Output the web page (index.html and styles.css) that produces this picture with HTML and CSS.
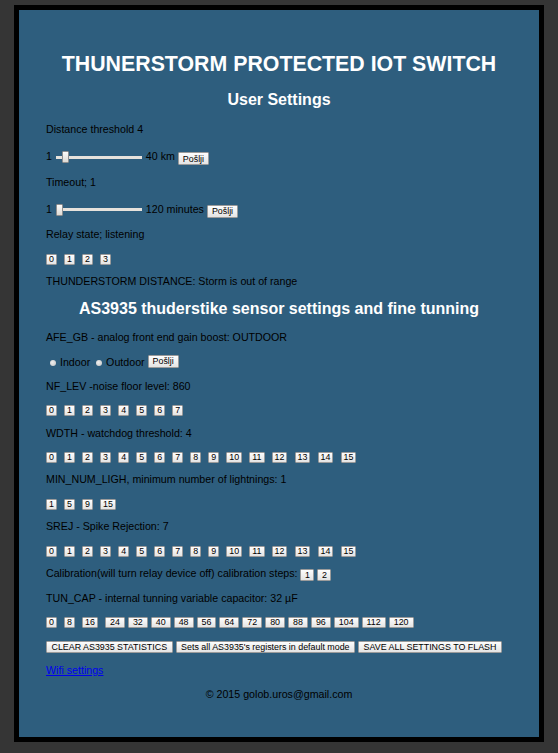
FILE: index.html
```html
<!DOCTYPE html>
<html>
<head>
<meta charset="utf-8">
<title>THUNERSTORM PROTECTED IOT SWITCH</title>
<link rel="stylesheet" href="styles.css">
</head>
<body>
<div class="page">
<h1 class="title">THUNERSTORM PROTECTED IOT SWITCH</h1>
<h2 class="sub user">User Settings</h2>
<p>Distance threshold 4</p>
<p class="slrow">1 <input type="range" class="slider" min="1" max="40" value="4"> 40 km <button class="tb">Pošlji</button></p>
<p>Timeout; 1</p>
<p class="slrow">1 <input type="range" class="slider" min="1" max="120" value="1"> 120 minutes <button class="tb">Pošlji</button></p>
<p>Relay state; listening</p>
<p class="btns"><button class="nb">0</button><button class="nb">1</button><button class="nb">2</button><button class="nb">3</button></p>
<p>THUNDERSTORM DISTANCE: Storm is out of range</p>
<h2 class="sub sensor">AS3935 thuderstike sensor settings and fine tunning</h2>
<p>AFE_GB - analog front end gain boost: OUTDOOR</p>
<p class="radrow"><input type="radio" name="afe" class="radio first"> Indoor <input type="radio" name="afe" class="radio"> Outdoor <button class="tb">Pošlji</button></p>
<p>NF_LEV -noise floor level: 860</p>
<p class="btns"><button class="nb">0</button><button class="nb">1</button><button class="nb">2</button><button class="nb">3</button><button class="nb">4</button><button class="nb">5</button><button class="nb">6</button><button class="nb">7</button></p>
<p>WDTH - watchdog threshold: 4</p>
<p class="btns"><button class="nb">0</button><button class="nb">1</button><button class="nb">2</button><button class="nb">3</button><button class="nb">4</button><button class="nb">5</button><button class="nb">6</button><button class="nb">7</button><button class="nb">8</button><button class="nb">9</button><button class="nb">10</button><button class="nb">11</button><button class="nb">12</button><button class="nb">13</button><button class="nb">14</button><button class="nb">15</button></p>
<p>MIN_NUM_LIGH, minimum number of lightnings: 1</p>
<p class="btns"><button class="nb">1</button><button class="nb">5</button><button class="nb">9</button><button class="nb">15</button></p>
<p>SREJ - Spike Rejection: 7</p>
<p class="btns"><button class="nb">0</button><button class="nb">1</button><button class="nb">2</button><button class="nb">3</button><button class="nb">4</button><button class="nb">5</button><button class="nb">6</button><button class="nb">7</button><button class="nb">8</button><button class="nb">9</button><button class="nb">10</button><button class="nb">11</button><button class="nb">12</button><button class="nb">13</button><button class="nb">14</button><button class="nb">15</button></p>
<p>Calibration(will turn relay device off) calibration steps: <button class="tb cal">1</button> <button class="tb cal">2</button></p>
<p>TUN_CAP - internal tunning variable capacitor: 32 µF</p>
<p class="btns"><button class="nb">0</button><button class="nb">8</button><button class="nb">16</button><button class="nb wide">24</button><button class="nb wide">32</button><button class="nb wide">40</button><button class="nb wide">48</button><button class="nb wide">56</button><button class="nb wide">64</button><button class="nb wide">72</button><button class="nb wide">80</button><button class="nb wide">88</button><button class="nb wide">96</button><button class="nb wide">104</button><button class="nb wide">112</button><button class="nb wide">120</button></p>
<p class="bigrow"><button class="tb big">CLEAR AS3935 STATISTICS</button><button class="tb big">Sets all AS3935's registers in default mode</button><button class="tb big">SAVE ALL SETTINGS TO FLASH</button></p>
<p><a href="#" class="link">Wifi settings</a></p>
<p class="foot">© 2015 golob.uros@gmail.com</p>
</div>
</body>
</html>
```

FILE: styles.css
```css
html, body {
  background: #353535;
}
body {
  margin: 5px 0 0 0;
  font-family: "Liberation Sans", Arial, sans-serif;
  font-size: 10.67px;
  color: #000;
}
.page {
  width: 466px;
  margin: 0 auto;
  border: 5px solid #000;
  background: #2e5e7e;
  padding: 28px 27px 25px 27px;
}
.title {
  font-size: 21.33px;
  font-weight: bold;
  color: #fff;
  text-align: center;
  margin: 14.3px 0 13.3px 0;
}
.sub {
  font-size: 16px;
  font-weight: bold;
  color: #fff;
  text-align: center;
  margin: 13.3px 0;
}
.sub.user {
  margin-bottom: 14.7px;
}
.sub.sensor {
  margin: 11.3px 0 12.7px 0;
}
p {
  margin: 10.67px 0;
  line-height: 13.33px;
}
.slrow {
  margin: 13.5px 0 10.2px 0;
}
.radrow {
  margin: 10px 0;
}
.btns {
  display: flex;
  align-items: center;
  gap: 3px;
  height: 11px;
  margin: 12px 0 10.67px 0;
}
.bigrow {
  display: flex;
  align-items: center;
  gap: 3px;
  height: 12px;
  margin: 13px 0 9.3px 0;
}
.slider {
  -webkit-appearance: none;
  appearance: none;
  width: 86px;
  height: 12px;
  margin: 0 1px;
  padding: 0;
  background: transparent;
  vertical-align: middle;
}
.slider::-webkit-slider-runnable-track {
  height: 3px;
  background: #e6e2dc;
  border: none;
}
.slider::-webkit-slider-thumb {
  -webkit-appearance: none;
  appearance: none;
  width: 7px;
  height: 12px;
  margin-top: -4.5px;
  background: linear-gradient(#fbfbfa, #dedbd5);
  border: 1px solid #8f8f8f;
  border-radius: 1px;
  box-sizing: border-box;
}
button {
  font-family: "Liberation Sans", Arial, sans-serif;
  font-size: 8.9px;
  color: #000;
  background: linear-gradient(#fdfdfd, #e4e4e4);
  border: 1px solid #9b9b9b;
  border-radius: 1px;
  margin: 0;
  box-sizing: border-box;
  cursor: pointer;
}
.nb {
  height: 11px;
  line-height: 9px;
  padding: 0 2px;
  margin-right: 4.1px;
}
.nb.wide {
  padding: 0 4px;
  margin-right: 0;
}
.tb {
  height: 13px;
  line-height: 10px;
  padding: 0 4px;
}
.tb.big {
  height: 12px;
  padding: 0 4.5px;
}
.tb.cal {
  height: 12px;
  padding: 0 3.5px;
  vertical-align: -0.5px;
}
.slrow .tb {
  vertical-align: -1.5px;
}
.radrow .tb {
  vertical-align: 1.5px;
}
.radio {
  -webkit-appearance: none;
  appearance: none;
  width: 6px;
  height: 6px;
  border-radius: 50%;
  background: radial-gradient(circle at 40% 40%, #eeeeee, #c4c4c4);
  border: none;
  margin: 0 1px 0 3px;
  vertical-align: 0;
}
.radio.first {
  margin-left: 4px;
}
.link {
  color: #0000ee;
  text-decoration: underline;
}
.foot {
  text-align: center;
}
```
